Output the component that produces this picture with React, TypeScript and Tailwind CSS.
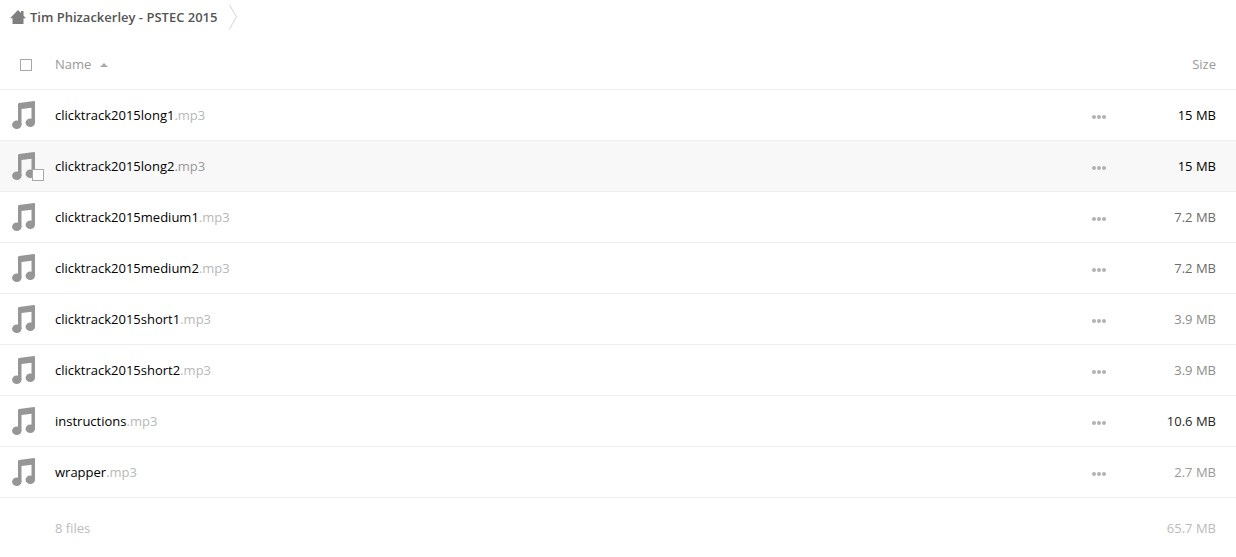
import * as React from "react";

const files = [
  { name: "clicktrack2015long1", size: "15 MB", color: "text-black" },
  {
    name: "clicktrack2015long2",
    size: "15 MB",
    color: "text-black",
    active: true,
  },
  { name: "clicktrack2015medium1", size: "7.2 MB", color: "text-[#6b6b6b]" },
  { name: "clicktrack2015medium2", size: "7.2 MB", color: "text-[#6b6b6b]" },
  { name: "clicktrack2015short1", size: "3.9 MB", color: "text-[#8c8c8c]" },
  { name: "clicktrack2015short2", size: "3.9 MB", color: "text-[#8c8c8c]" },
  { name: "instructions", size: "10.6 MB", color: "text-[#262626]" },
  { name: "wrapper", size: "2.7 MB", color: "text-[#999999]" },
];

const checkboxClass =
  "block size-3 appearance-none border border-[#a8a8a8] bg-white checked:bg-[#777777]";

function HomeIcon() {
  return (
    <svg className="size-4" viewBox="0 0 16 16" fill="#7f7f7f" aria-hidden="true">
      <path d="M8 1 0 9.300H2.500V15h11V9.300H16L13.500 6.600V2H11v2z" />
    </svg>
  );
}

function MusicIcon() {
  return (
    <svg className="size-8" viewBox="0 0 32 32" fill="#969696" aria-hidden="true">
      <path d="M10 5.200Q10 4.200 11 4L26 2.100Q27 2 27 3V24H23.500V8.700L13.500 10V26H10Z" />
      <ellipse cx="8.8" cy="25.7" rx="4.7" ry="4.3" />
      <ellipse cx="22.3" cy="23.8" rx="4.7" ry="4.3" />
    </svg>
  );
}

function DotsIcon() {
  return (
    <svg className="size-4" viewBox="0 0 16 16" fill="#b2b2b2" aria-hidden="true">
      <circle cx="3" cy="8" r="2" />
      <circle cx="8" cy="8" r="2" />
      <circle cx="13" cy="8" r="2" />
    </svg>
  );
}

export default function App() {
  return (
    <main className="bg-white font-['Open_Sans',sans-serif] text-[13px] leading-5">
      {/* Breadcrumb */}
      <nav className="flex h-[39px] items-start pt-1" aria-label="Breadcrumb">
        <a
          href="#"
          className="flex h-[26px] items-center gap-1 pl-[10px] font-semibold text-[#555555]"
        >
          <HomeIcon />
          Tim Phizackerley - PSTEC 2015
        </a>
        <svg
          className="ml-3 h-[26px] w-2"
          viewBox="0 0 8 26"
          fill="none"
          stroke="#d4d4d4"
          aria-hidden="true"
        >
          <path d="M0.500 1 7.500 13 0.500 25" />
        </svg>
      </nav>

      {/* File list */}
      <table className="w-full table-fixed border-separate border-spacing-0">
        <thead>
          <tr className="h-[51px] text-[#999999]">
            <th className="w-[55px] border-b border-[#eeeeee] pt-0.5 pl-5">
              <input
                type="checkbox"
                aria-label="Select all"
                className={checkboxClass}
              />
            </th>
            <th className="border-b border-[#eeeeee] text-left font-normal">
              <button className="flex items-center gap-2">
                Name
                <svg
                  className="h-2 w-[10px]"
                  viewBox="0 0 10 8"
                  fill="#aaaaaa"
                  aria-hidden="true"
                >
                  <path d="M5 3 9 7H1z" />
                </svg>
              </button>
            </th>
            <th className="w-8 border-b border-[#eeeeee]" />
            <th className="w-32 border-b border-[#eeeeee] pr-5 text-right font-normal">
              <button>Size</button>
            </th>
          </tr>
        </thead>
        <tbody>
          {files.map((file) => (
            <tr
              key={file.name}
              className={`h-[51px] ${file.active ? "bg-[#f8f8f8]" : ""}`}
            >
              <td className="border-b border-[#eeeeee] pl-2">
                <div className="relative size-8">
                  <MusicIcon />
                  {file.active && (
                    <input
                      type="checkbox"
                      aria-label={`Select ${file.name}`}
                      className={`${checkboxClass} absolute -right-1 bottom-px`}
                    />
                  )}
                </div>
              </td>
              <td className="border-b border-[#eeeeee]">
                <a href="#" className="text-black">
                  {file.name}
                  <span
                    className={file.active ? "text-[#999999]" : "text-[#b8b8b8]"}
                  >
                    .mp3
                  </span>
                </a>
              </td>
              <td className="border-b border-[#eeeeee] pt-1 pl-[15px]">
                <button className="block" aria-label={`Actions for ${file.name}`}>
                  <DotsIcon />
                </button>
              </td>
              <td
                className={`border-b border-[#eeeeee] pr-5 text-right ${file.color}`}
              >
                {file.size}
              </td>
            </tr>
          ))}
        </tbody>
        <tfoot>
          <tr className="h-[59px] text-[#bbbbbb]">
            <td />
            <td>8 files</td>
            <td />
            <td className="pr-5 text-right">65.7 MB</td>
          </tr>
        </tfoot>
      </table>
    </main>
  );
}
